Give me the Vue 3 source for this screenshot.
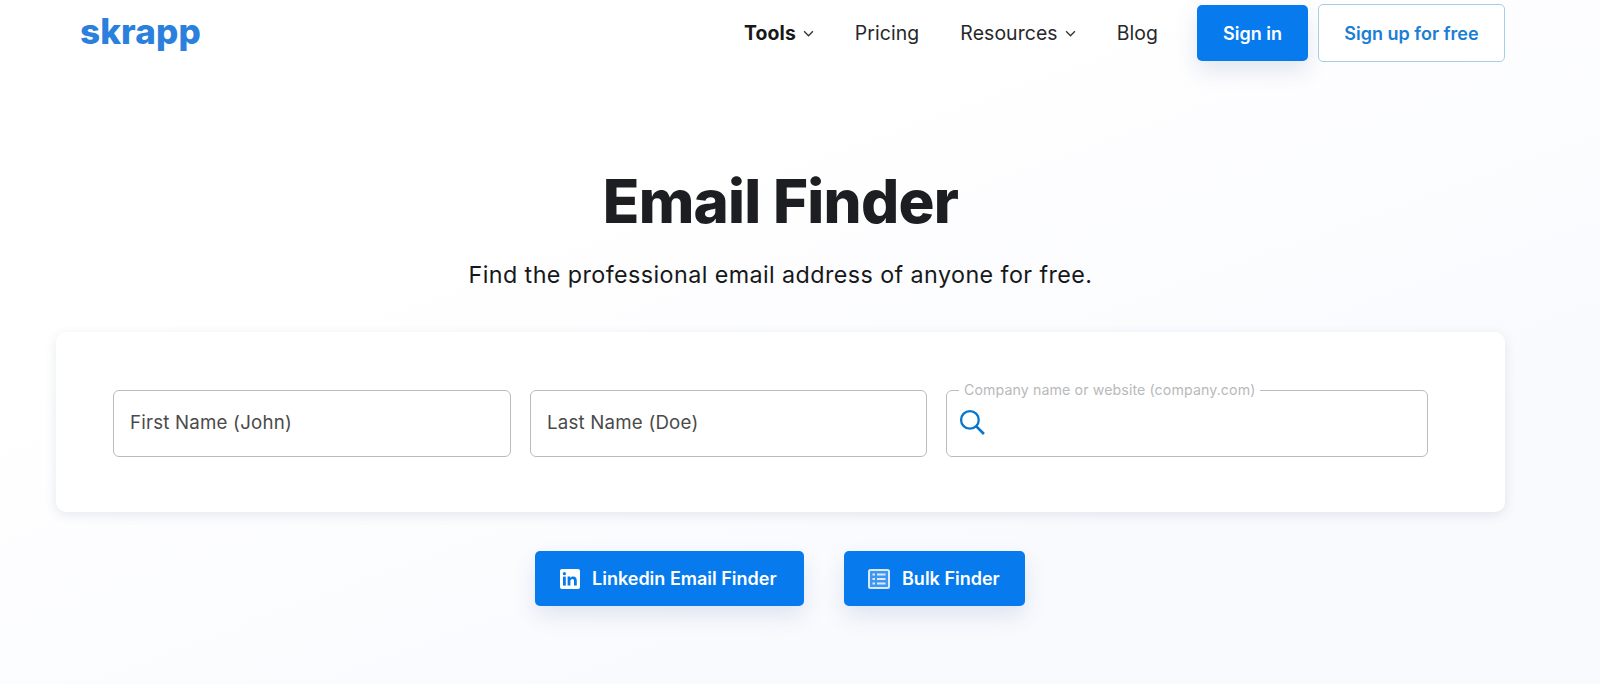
<script setup>
const navItems = [
  { label: 'Tools', bold: true, caret: true },
  { label: 'Pricing' },
  { label: 'Resources', caret: true },
  { label: 'Blog' },
]
</script>

<template>
  <div class="page">
    <header class="topbar">
      <div class="logo">skrapp</div>
      <nav class="nav">
        <a v-for="item in navItems" :key="item.label" class="nav-item" :class="{ bold: item.bold }">
          {{ item.label }}
          <svg v-if="item.caret" class="caret" viewBox="0 0 10 6" width="11" height="7">
            <path d="M1 1l4 4 4-4" fill="none" stroke="#333" stroke-width="1.2" />
          </svg>
        </a>
      </nav>
      <button class="btn signin">Sign in</button>
      <button class="btn signup">Sign up for free</button>
    </header>

    <main class="hero">
      <h1>Email Finder</h1>
      <p class="sub">Find the professional email address of anyone for free.</p>

      <section class="card">
        <div class="field">First Name (John)</div>
        <div class="field">Last Name (Doe)</div>
        <fieldset class="field company">
          <legend>Company name or website (company.com)</legend>
          <svg viewBox="0 0 26 26" width="27" height="27" class="search">
            <circle cx="10.5" cy="10.5" r="8.5" fill="none" stroke="#0a75c9" stroke-width="2.2" />
            <path d="M16.7 16.7l7.3 7.3" stroke="#0a75c9" stroke-width="2.6" fill="none" />
          </svg>
        </fieldset>
      </section>

      <div class="actions">
        <button class="btn action linkedin">
          <svg viewBox="0 0 20 20" width="20" height="20">
            <rect width="20" height="20" rx="2" fill="#fff" />
            <rect x="3" y="7.6" width="2.8" height="9" fill="#077bee" />
            <circle cx="4.4" cy="4.7" r="1.6" fill="#077bee" />
            <path d="M7.6 7.6h2.7v1.3c.5-.9 1.5-1.5 2.9-1.5 2.6 0 3.6 1.6 3.6 4.3v4.9h-2.8v-4.4c0-1.4-.4-2.3-1.6-2.3-1.3 0-2 .9-2 2.4v4.3H7.6z" fill="#077bee" />
          </svg>
          Linkedin Email Finder
        </button>
        <button class="btn action bulk">
          <svg viewBox="0 0 22 20" width="22" height="20">
            <rect x="1" y="1" width="20" height="18" rx="1.5" fill="#3f97f1" stroke="#d8e9fc" stroke-width="2" />
            <path d="M4.5 5.5h2.5M9 5.5h8.5M4.5 10h2.5M9 10h8.5M4.5 14.5h2.5M9 14.5h8.5" stroke="#d8e9fc" stroke-width="2" fill="none" />
          </svg>
          Bulk Finder
        </button>
      </div>
    </main>
  </div>
</template>

<style>
html, body { margin: 0; }
</style>

<style scoped>
.page {
  height: 684px;
  overflow: hidden;
  box-sizing: border-box;
  padding: 4px 95px 0 56px;
  background: linear-gradient(160deg, #ffffff 30%, #f9fafe 75%);
  font-family: Inter, "Liberation Sans", sans-serif;
  color: #1f2023;
}
.topbar {
  display: flex;
  align-items: center;
  height: 58px;
}
.logo {
  margin-left: 24px;
  margin-top: -4px;
  font-family: Inter, sans-serif;
  font-weight: 800;
  font-size: 35px;
  letter-spacing: 0.15px;
  color: #2a80dc;
  line-height: 1;
}
.nav {
  display: flex;
  align-items: center;
  gap: 41px;
  margin-left: auto;
  margin-right: 39px;
}
.nav-item {
  display: flex;
  align-items: center;
  gap: 7px;
  font-size: 19.4px;
  letter-spacing: 0.1px;
  color: #26272a;
}
.nav-item.bold { font-weight: 700; color: #17181a; }
.caret { margin-top: 1px; }
.btn {
  font-family: inherit;
  font-weight: 600;
  font-size: 18px;
  border-radius: 5px;
  cursor: pointer;
  box-sizing: border-box;
}
.signin {
  width: 111px;
  height: 56px;
  border: 0;
  background: #077bee;
  color: #fff;
  box-shadow: 0 10px 22px rgba(30, 70, 130, 0.13);
  margin-right: 10px;
}
.signup {
  width: 187px;
  height: 58px;
  background: #fff;
  border: 1px solid #a5cfe6;
  color: #1a7ed4;
}
.hero {
  display: flex;
  flex-direction: column;
  align-items: center;
}
h1 {
  margin: 103px 0 0;
  font-size: 60px;
  line-height: 72px;
  font-weight: 800;
  letter-spacing: -0.75px;
  color: #1d1e21;
}
.sub {
  margin: 22px 0 0;
  font-size: 23.3px;
  line-height: 32px;
  letter-spacing: 0.42px;
  color: #17181a;
}
.card {
  align-self: stretch;
  margin-top: 41px;
  height: 180px;
  box-sizing: border-box;
  padding: 58px 77px 0 57px;
  background: #fff;
  border-radius: 10px;
  box-shadow: 0 3px 12px rgba(50, 70, 110, 0.12);
  display: grid;
  grid-template-columns: 398px 397px 1fr;
  column-gap: 19px;
  align-items: start;
}
.field {
  box-sizing: border-box;
  height: 67px;
  border: 1px solid #bcbcbe;
  border-radius: 6px;
  padding: 0 16px 2px;
  display: flex;
  align-items: center;
  font-size: 18.7px;
  letter-spacing: 0.2px;
  color: #4a4a4a;
}
fieldset.company {
  margin: -8px 0 0;
  height: 75px;
  padding: 0 12px 8px;
  min-width: 0;
  display: block;
}
legend {
  margin-left: 0;
  padding: 0 5px;
  font-size: 14.2px;
  line-height: 16px;
  letter-spacing: 0.1px;
  color: #b9b9bb;
}
.search { display: block; margin-top: 11px; }
.actions {
  display: flex;
  gap: 40px;
  margin-top: 39px;
  margin-right: 1px;
}
.action {
  height: 55px;
  border: 0;
  background: #077bee;
  color: #fff;
  font-size: 18px;
  display: flex;
  align-items: center;
  gap: 12px;
  box-shadow: 0 10px 22px rgba(30, 70, 130, 0.12);
}
.linkedin { width: 269px; padding: 0 0 0 25px; }
.bulk { width: 181px; padding: 0 0 0 24px; }
</style>
